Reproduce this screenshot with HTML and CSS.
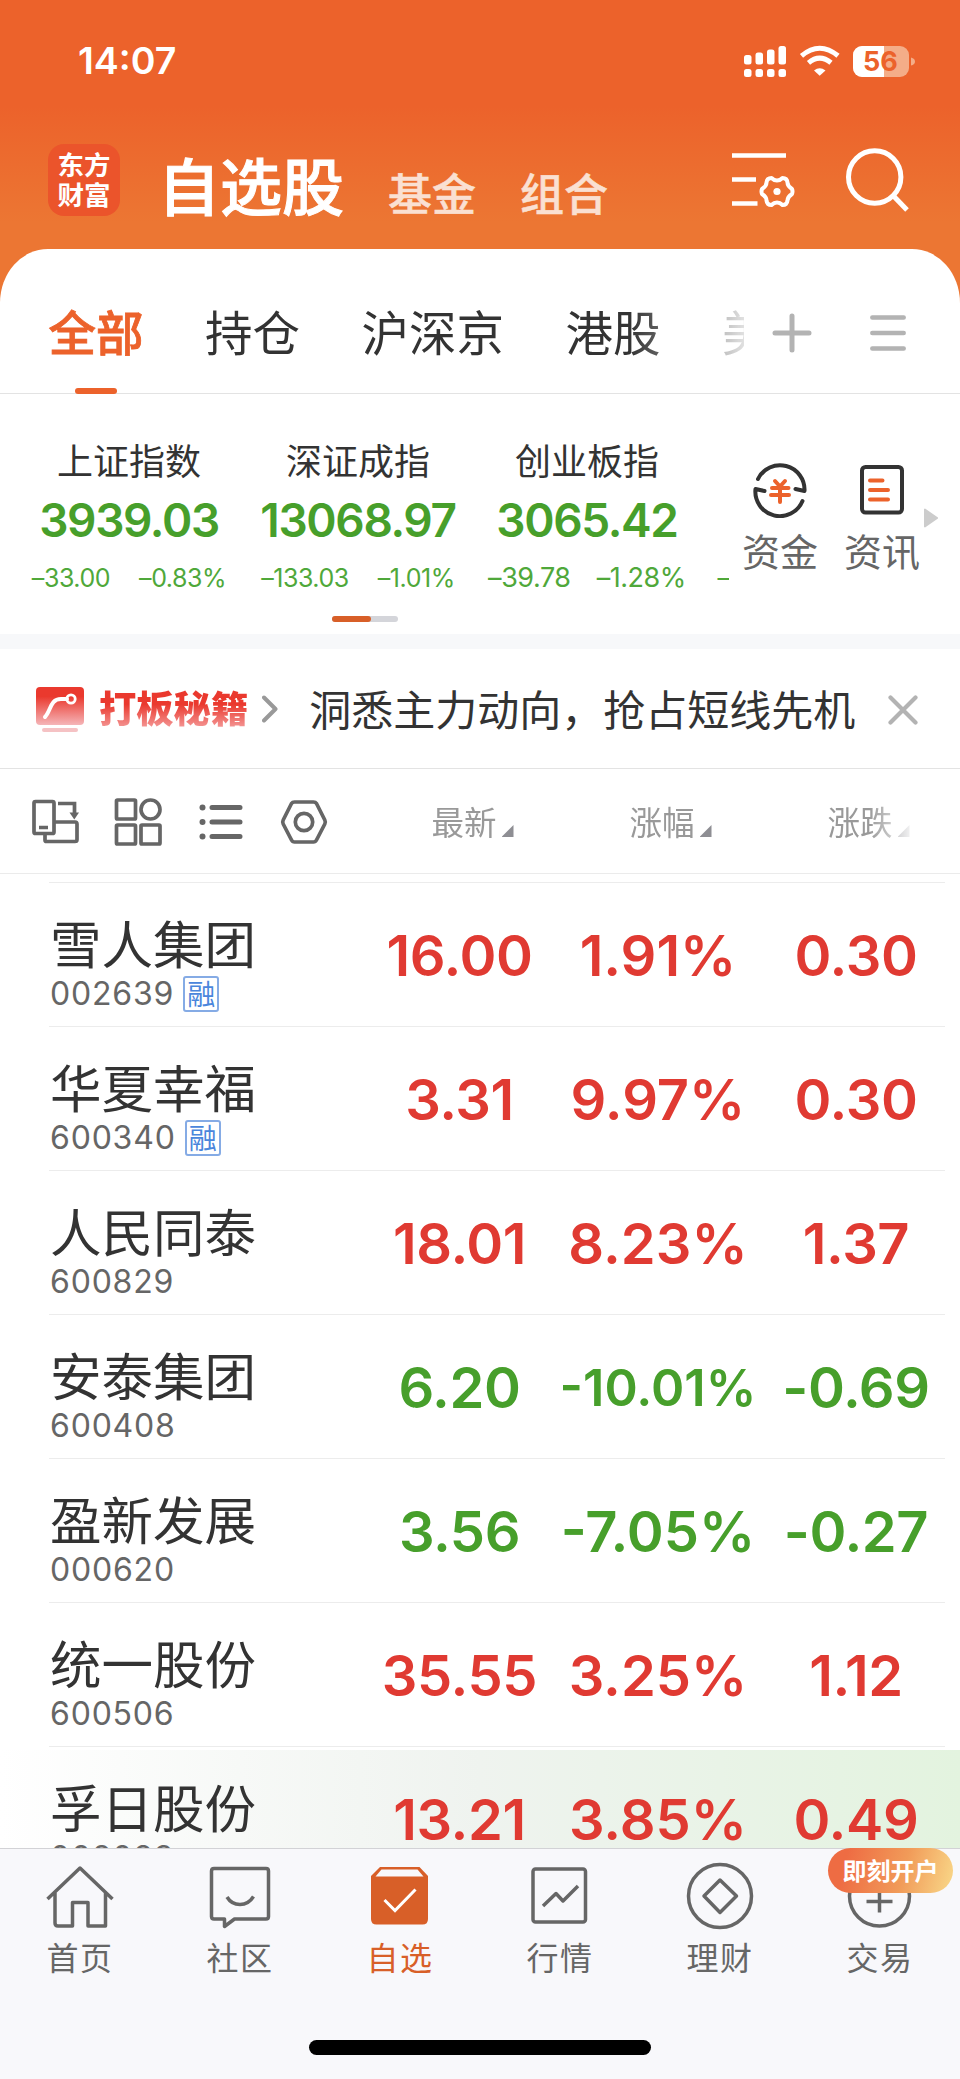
FILE: index.html
```html
<!DOCTYPE html>
<html lang="zh-CN">
<head>
<meta charset="utf-8">
<title>自选股</title>
<link rel="stylesheet" href="styles.css">
</head>
<body>
<div class="app">
  <header class="header">
    <div class="status">
      <span class="time">14:07</span>
      <svg class="status-icons" width="176" height="36" viewBox="0 0 176 36">
        <g fill="#fff">
          <rect x="4" y="12" width="7.5" height="9.5" rx="2.5"/><rect x="15.5" y="9.500" width="7.500" height="12" rx="2.500"/><rect x="27" y="6.500" width="7.500" height="15" rx="2.500"/><rect x="38.500" y="3" width="7.500" height="18.500" rx="2.500"/>
          <rect x="4" y="26" width="7.500" height="8" rx="2.500"/><rect x="15.500" y="26" width="7.500" height="8" rx="2.500"/><rect x="27" y="26" width="7.500" height="8" rx="2.500"/><rect x="38.500" y="26" width="7.500" height="8" rx="2.500"/>
          <path d="M74 27.500Q79.700 22.800 85.500 27.500L79.700 32.800Z"/>
        </g>
        <g fill="none" stroke="#fff" stroke-width="5">
          <path d="M61.500 12.800Q79.700-2.300 98 12.800"/><path d="M68.500 19.800Q79.700 10.500 91 19.800"/>
        </g>
        <rect x="113" y="3" width="56" height="31" rx="9" fill="#f4ad88"/>
        <path d="M122 3H144V34H122A9 9 0 0 1 113 25V12A9 9 0 0 1 122 3Z" fill="#fff"/>
        <path d="M171 14.500Q175 15.500 175 18.500T171 22.500Z" fill="#f4ad88"/>
        <text class="battery" x="140.500" y="28" text-anchor="middle">56</text>
      </svg>
    </div>
    <div class="nav">
      <div class="logo"><span>东方</span><span>财富</span></div>
      <h1 class="title">自选股</h1>
      <span class="subnav">基金</span>
      <span class="subnav">组合</span>
      <svg class="nav-icon" width="64" height="60" viewBox="0 0 64 60" fill="none" stroke="#fff" stroke-width="4.500">
        <path d="M0 8.500H54M0 32.500H24M0 56.500H25.500"/>
        <path stroke-width="4" stroke-linejoin="round" d="M34.500 35.500Q35 31 39.500 31Q42 33.500 45 33.500T50.500 31Q55 31 55.500 35.500Q55.500 39 60 42Q61 44.500 60 47Q55.500 50 55.500 53.500Q55 58 50.500 58Q48 55.500 45 55.500T39.500 58Q35 58 34.500 53.500Q34.500 50 30 47Q29 44.500 30 42Q34.500 39 34.500 35.500Z"/>
        <circle cx="45" cy="44.500" r="3.600" fill="#fff" stroke="none"/>
      </svg>
      <svg class="search-icon" width="64" height="66" viewBox="0 0 64 66" fill="none" stroke="#fff" stroke-width="5">
        <circle cx="28.700" cy="31" r="26.200"/><path d="M48 50.500L61 64"/>
      </svg>
    </div>
  </header>

  <main class="panel">
    <nav class="tabs">
      <div class="tab-list">
        <span class="tab active">全部</span><span class="tab">持仓</span><span class="tab">沪深京</span><span class="tab">港股</span><span class="tab">美股</span>
      </div>
      <svg class="plus" width="40" height="40" viewBox="0 0 40 40" stroke="#b3b3b3" stroke-width="5" stroke-linecap="round"><path d="M3 20H37M20 3V37"/></svg>
      <svg class="menu" width="36" height="40" viewBox="0 0 36 40" stroke="#b3b3b3" stroke-width="4.500" stroke-linecap="round"><path d="M2.300 4.500H33.700M2.300 20H33.700M2.300 35.500H33.700"/></svg>
    </nav>

    <section class="indices">
      <div class="index-list">
        <div class="index"><div class="index-name">上证指数</div><div class="index-value">3939.03</div><div class="index-change"><span>–33.00</span><span>–0.83%</span></div></div>
        <div class="index"><div class="index-name">深证成指</div><div class="index-value">13068.97</div><div class="index-change"><span>–133.03</span><span>–1.01%</span></div></div>
        <div class="index"><div class="index-name">创业板指</div><div class="index-value">3065.42</div><div class="index-change large"><span>–39.78</span><span>–1.28%</span></div></div>
        <div class="index next"><div class="index-change">–</div></div>
        <div class="pager"><span></span></div>
      </div>
      <div class="shortcut">
        <svg width="56" height="56" viewBox="0 0 56 56" fill="none" stroke="#333" stroke-width="4" stroke-linecap="round" stroke-linejoin="round">
          <path d="M6 17A24.500 24.500 0 0 1 52.500 29L43.500 27"/><path d="M50.500 39A24.500 24.500 0 0 1 3.500 27L12.500 29"/>
          <path stroke="#ec622b" d="M23 19L28 24.500L33 19M20 26H36.500M19 33H37M28 25V40"/>
        </svg>
        <span>资金</span>
      </div>
      <div class="shortcut">
        <svg width="56" height="56" viewBox="0 0 56 56" fill="none" stroke="#333" stroke-width="4" stroke-linecap="round">
          <rect x="8" y="5" width="40" height="45.500" rx="3.500"/><path stroke="#ec622b" d="M16 18.500H28.500M16 28H34M16 37.500H34"/>
        </svg>
        <span>资讯</span>
      </div>
      <svg class="more" width="14" height="20" viewBox="0 0 14 20"><path d="M0 1L1 .5L14 9.500V10.500L1 19.500L0 19Z" fill="#ccc"/></svg>
    </section>

    <section class="promo">
      <svg width="48" height="48" viewBox="0 0 48 48">
        <defs><linearGradient id="red" x2="0" y2="1"><stop offset=".25" stop-color="#ea392e"/><stop offset="1" stop-color="#f5b5b8"/></linearGradient></defs>
        <rect y="1" width="48" height="38" rx="4" fill="url(#red)"/><rect x="6" y="42" width="36" height="4" rx="2" fill="#f5c2c4"/>
        <path d="M9 31C15 25 14 13 25 13H31" fill="none" stroke="#fff" stroke-width="4" stroke-linecap="round"/><circle cx="35" cy="13" r="4.200" fill="none" stroke="#fff" stroke-width="2.800"/>
      </svg>
      <span class="promo-brand">打板秘籍</span>
      <svg class="chevron" width="16" height="28" viewBox="0 0 16 28" fill="none" stroke="#999" stroke-width="4" stroke-linecap="round" stroke-linejoin="round"><path d="M2 2.500L13.500 14L2 25.500"/></svg>
      <span class="promo-text">洞悉主力动向，抢占短线先机</span>
      <svg class="close" width="30" height="30" viewBox="0 0 30 30" stroke="#b3b3b3" stroke-width="4.200" stroke-linecap="round"><path d="M2.500 2.500L27.500 27.500M27.500 2.500L2.500 27.500"/></svg>
    </section>

    <section class="toolbar">
      <div class="tools">
        <svg width="48" height="48" viewBox="0 0 48 48" fill="none" stroke="#666" stroke-width="3.700">
          <rect x="3" y="3.500" width="20" height="32" rx="1.500"/><path d="M14 35.500V42Q14 43.500 15.500 43.500H44Q46 43.500 46 41.500V26Q46 24 44 24H23M8 29.500H17M27 5.500H43.500V17"/><path d="M38.500 14.500H48L43.300 21.500Z" fill="#666" stroke="none"/>
        </svg>
        <svg width="48" height="48" viewBox="0 0 48 48" fill="none" stroke="#666" stroke-width="3.700">
          <rect x="2.500" y="2" width="19" height="19" rx="1"/><rect x="2.500" y="27" width="19" height="19" rx="1"/><rect x="27" y="27" width="19" height="19" rx="1"/><circle cx="36.500" cy="11.500" r="9.500"/>
        </svg>
        <svg width="48" height="48" viewBox="0 0 48 48" fill="none" stroke="#666" stroke-width="5" stroke-linecap="round">
          <path d="M15 9.500H43M15 24H43M15 38.500H43"/><g fill="#666" stroke="none"><circle cx="5.500" cy="9.500" r="3"/><circle cx="5.500" cy="24" r="3"/><circle cx="5.500" cy="38.500" r="3"/></g>
        </svg>
        <svg width="48" height="48" viewBox="0 0 48 48" fill="none" stroke="#666" stroke-width="3.700" stroke-linejoin="round">
          <path d="M14.500 4H33.500Q35.500 4 36.500 5.500L44.800 22Q45.800 24 44.800 26L36.500 42Q35.500 44 33.500 44H14.500Q12.500 44 11.500 42L3.200 26Q2.200 24 3.200 22L11.500 5.500Q12.500 4 14.500 4Z"/><circle cx="24" cy="24" r="8.700"/>
        </svg>
      </div>
      <div class="sort-list">
        <span class="sort">最新<i></i></span><span class="sort">涨幅<i></i></span><span class="sort">涨跌<i></i></span>
      </div>
    </section>

    <section class="stocks">
      <div class="stock up"><div class="stock-id"><b>雪人集团</b><span>002639<em>融</em></span></div><div class="num">16.00</div><div class="num">1.91%</div><div class="num">0.30</div></div>
      <div class="stock up"><div class="stock-id"><b>华夏幸福</b><span>600340<em>融</em></span></div><div class="num">3.31</div><div class="num">9.97%</div><div class="num">0.30</div></div>
      <div class="stock up"><div class="stock-id"><b>人民同泰</b><span>600829</span></div><div class="num">18.01</div><div class="num">8.23%</div><div class="num">1.37</div></div>
      <div class="stock down"><div class="stock-id"><b>安泰集团</b><span>600408</span></div><div class="num">6.20</div><div class="num small">-10.01%</div><div class="num">-0.69</div></div>
      <div class="stock down"><div class="stock-id"><b>盈新发展</b><span>000620</span></div><div class="num">3.56</div><div class="num">-7.05%</div><div class="num">-0.27</div></div>
      <div class="stock up"><div class="stock-id"><b>统一股份</b><span>600506</span></div><div class="num">35.55</div><div class="num">3.25%</div><div class="num">1.12</div></div>
      <div class="stock up flash"><div class="stock-id"><b>孚日股份</b><span>002083</span></div><div class="num">13.21</div><div class="num">3.85%</div><div class="num">0.49</div></div>
    </section>
  </main>

  <footer class="tabbar">
    <div class="tabbar-items">
      <div class="item"><svg width="70" height="70" viewBox="0 0 70 70" fill="none" stroke="#666" stroke-width="3.500" stroke-linejoin="round"><path d="M2.500 38L35 7L67.500 38M10 31V62Q10 65 13 65H27.500V41.500H43V65H60.500V31"/></svg><span>首页</span></div>
      <div class="item"><svg width="70" height="70" viewBox="0 0 70 70" fill="none" stroke="#666" stroke-width="3.500" stroke-linejoin="round"><path d="M9 7.500H61Q63.500 7.500 63.500 10V55.500Q63.500 58 61 58H29.500L19.500 65.500V58H9Q6.500 58 6.500 55.500V10Q6.500 7.500 9 7.500Z"/><path d="M22 36Q26.500 43.500 35 43.500T48.500 35.500"/></svg><span>社区</span></div>
      <div class="item current"><svg width="70" height="70" viewBox="0 0 70 70"><path d="M15 6H54.500L63 15V58Q63 63.500 57.500 63.500H11.500Q6 63.500 6 58V15Z" fill="#d85f28"/><path d="M16.500 8.500H52.500L58.500 15.500H10.500Z" fill="#f8f8fb"/><path d="M19.500 39L30 49.500L50.500 28.500" fill="none" stroke="#fff" stroke-width="3"/></svg><span>自选</span></div>
      <div class="item"><svg width="70" height="70" viewBox="0 0 70 70" fill="none" stroke="#666" stroke-width="3.500" stroke-linejoin="round"><rect x="8" y="8" width="52.500" height="53" rx="2.500"/><path d="M18 45L31 32.500L38 40L53 25"/></svg><span>行情</span></div>
      <div class="item"><svg width="70" height="70" viewBox="0 0 70 70" fill="none" stroke="#666" stroke-width="3.500" stroke-linejoin="round"><circle cx="35" cy="35" r="31.500"/><path d="M35 19L51.500 35L35 51.500L19 35Z"/></svg><span>理财</span></div>
      <div class="item"><svg width="70" height="70" viewBox="0 0 70 70" fill="none" stroke="#666" stroke-width="3.500"><circle cx="34.500" cy="35" r="30"/><path d="M21.500 40.500H47.500M34.500 24V51.500"/></svg><span>交易</span><div class="tag">即刻开户</div></div>
    </div>
    <div class="home-bar"></div>
  </footer>
</div>
</body>
</html>
```

FILE: styles.css
```css
* { box-sizing: border-box; }
body { margin: 0; font-family: "Noto Sans CJK SC", sans-serif; color: #333; }
svg { display: block; flex: none; }
h1, b, em, i { margin: 0; font-style: normal; font-weight: 400; }

.app { width: 960px; height: 2079px; display: flex; flex-direction: column; overflow: hidden; background: #fff; }

.header { height: 309px; margin-bottom: -60px; flex: none; background: linear-gradient(#ec622b 106px, #ec7633 222px); }
.status { height: 122px; padding: 0 44px 0 78px; display: flex; justify-content: space-between; align-items: center; }
.time { font: 600 37.500px/46px Inter, sans-serif; color: #fff; }
.battery { font: 700 27px Inter, sans-serif; fill: #ec622b; }
.nav { height: 127px; padding-left: 48px; display: flex; align-items: flex-start; color: #fff; white-space: nowrap; }
.logo { flex: none; width: 72px; height: 72px; margin: 22px 38px 0 0; padding-top: 5px; border-radius: 16px; background: #eb542b; display: flex; flex-direction: column; align-items: center; font-size: 26.500px; font-weight: 700; line-height: 30px; }
.title { width: 186px; margin-top: 28px; font-size: 62px; font-weight: 500; -webkit-text-stroke: 1px #fff; line-height: 68px; }
.subnav { margin: 46px 0 0 44px; width: 88px; font-size: 44px; font-weight: 500; -webkit-text-stroke: .5px #fae0d2; line-height: 48px; color: #fae0d2; }
.nav-icon { margin: 25px 0 0 124px; }
.search-icon { margin: 24px 0 0 50px; }

.panel { height: 1599px; flex: none; overflow: hidden; background: #fff; border-radius: 48px 48px 0 0 / 54px 54px 0 0; }

.tabs { height: 145px; border-bottom: 1px solid #e3e3e3; display: flex; align-items: flex-start; }
.tab-list { width: 744px; height: 145px; padding-left: 48.500px; display: flex; gap: 61.500px; overflow: hidden; white-space: nowrap; mask-image: linear-gradient(90deg, #000 630px, rgba(0,0,0,.15) 744px); }
.tab { flex: none; height: 145px; font-size: 47.500px; line-height: 64px; padding-top: 50px; }
.tab.active { color: #ec622b; font-weight: 500; -webkit-text-stroke: .8px #ec622b; display: flex; flex-direction: column; align-items: center; justify-content: space-between; }
.tab.active::after { content: ""; width: 42px; height: 6px; border-radius: 3px; background: #ec622b; }
.plus { margin: 64px 0 0 28px; }
.menu { margin: 64px 0 0 58px; }

.indices { height: 240px; display: flex; }
.index-list { width: 729px; padding-left: 14.500px; display: grid; grid-template-columns: repeat(4, 229px); grid-template-rows: 222px 6px; overflow: hidden; }
.index { padding-top: 40px; text-align: center; white-space: nowrap; }
.index-name { font-size: 36px; line-height: 50px; }
.index-value { margin-top: 9px; font: 600 46px/54px Inter, sans-serif; letter-spacing: -1.350px; color: #479f2b; }
.index-change { height: 32px; margin-top: 15px; display: flex; justify-content: center; gap: 29px; font: 400 25px/32px Inter, sans-serif; letter-spacing: -.450px; color: #4fa83a; }
.index-change.large { font-size: 27px; gap: 26px; }
.index.next { padding-top: 168px; }
.index.next .index-change { justify-content: flex-start; padding-left: 16px; margin: 0; }
.pager { width: 66px; height: 6px; margin-left: 317px; border-radius: 3px; background: #d4d5da; }
.pager span { display: block; width: 39px; height: 6px; border-radius: 3px; background: #d85f28; }
.shortcut { width: 102px; padding-top: 68px; display: flex; flex-direction: column; align-items: center; font-size: 38px; line-height: 50px; color: #666; white-space: nowrap; }
.shortcut span { margin-top: 7px; }
.more { margin: 114px 0 0 -9px; }

.promo { height: 135px; border-top: 15px solid #f7f8fa; border-bottom: 1px solid #e3e3e3; padding-left: 36px; display: flex; align-items: flex-start; white-space: nowrap; }
.promo svg { margin-top: 37px; }
.promo-brand { margin: 31px 0 0 15px; font-size: 37.300px; font-weight: 900; line-height: 54px; background: linear-gradient(#ea392e 45%, #f5a5a5 95%); background-clip: text; color: transparent; }
.promo .chevron { margin: 46px 0 0 14px; }
.promo-text { width: 546px; margin: 31px 0 0 31px; font-size: 42px; line-height: 56px; }
.promo .close { margin: 46px 0 0 33px; }

.toolbar { height: 105px; border-bottom: 1px solid #ebebeb; display: flex; align-items: center; }
.tools { width: 359px; padding: 1px 0 0 31px; display: flex; gap: 35px; }
.sort-list { width: 601px; display: flex; mask-image: linear-gradient(90deg, #000 510px, rgba(0,0,0,.15) 550px); }
.sort { width: 198px; padding-left: 29px; display: flex; justify-content: center; align-items: flex-end; gap: 5px; font-size: 32.500px; line-height: 50px; color: #999; white-space: nowrap; }
.sort i { width: 12px; height: 12px; margin-bottom: 9px; background: #8e8e93; clip-path: polygon(100% 0, 100% 100%, 0 100%); }

.stocks { padding-top: 8px; }
.stock { height: 144px; padding-left: 49px; display: grid; grid-template-columns: 311px 199px 198px 198px; background: linear-gradient(#ececec, #ececec) 49px 0 / 896px 1px no-repeat; }
.stock-id { padding-top: 26px; }
.stock-id b { display: block; margin-left: 1px; font-size: 51.500px; line-height: 68px; height: 68px; }
.stock-id span { display: flex; align-items: center; height: 36px; gap: 9px; padding-left: 1px; font: 400 32px/36px Inter, sans-serif; letter-spacing: .8px; color: #666; }
.stock-id em { width: 36px; height: 36px; border: 2px solid #85abe5; border-radius: 3px; font: 400 28px/31px "Noto Sans CJK SC", sans-serif; letter-spacing: 0; color: #4a86dc; text-align: center; }
.num { text-align: center; font: 600 56px/66px Inter, sans-serif; letter-spacing: -.4px; padding-top: 41px; white-space: nowrap; }
.num:nth-child(3) { letter-spacing: 0; }
.num.small { font-size: 50.500px; }
.up .num { color: #e03a32; }
.down .num { color: #479f2b; }
.flash { background: linear-gradient(#ececec, #ececec) 49px 0 / 896px 1px no-repeat, linear-gradient(90deg, #fff, #eff3ef 50%, #e3f3df) 0 4px no-repeat; }

.tabbar { height: 231px; flex: none; border-top: 1px solid #d2d2d6; background: #f8f8fb; }
.tabbar-items { display: flex; height: 191px; }
.item { position: relative; width: 160px; padding-top: 12px; display: flex; flex-direction: column; align-items: center; color: #666; font-size: 32px; line-height: 46px; letter-spacing: 1.500px; }
.item span { margin-top: 2px; }
.item.current { color: #d85f28; }
.tag { position: absolute; left: 28px; top: -1px; width: 125px; height: 45px; border-radius: 23px; background: linear-gradient(105deg, #ee6c43 15%, #f19b59 60%, #f8d183 95%); color: #fff; text-align: center; font-size: 24px; line-height: 43px; font-weight: 700; letter-spacing: 0; white-space: nowrap; }
.home-bar { width: 342px; height: 15px; margin: 0 auto; border-radius: 8px; background: #000; }
```
